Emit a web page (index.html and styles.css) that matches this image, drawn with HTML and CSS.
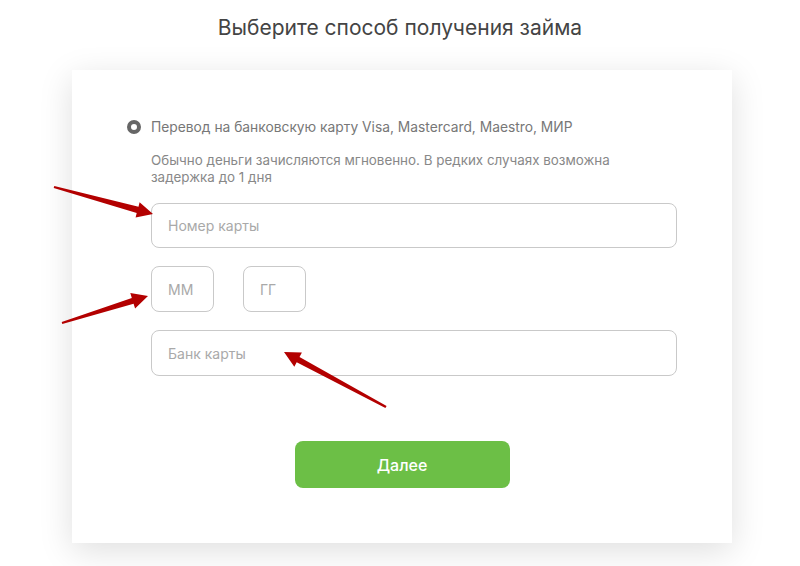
FILE: index.html
```html
<!DOCTYPE html>
<html lang="ru">
<head>
<meta charset="utf-8">
<title>Выберите способ получения займа</title>
<link rel="stylesheet" href="styles.css">
</head>
<body>
<h1 class="title">Выберите способ получения займа</h1>
<div class="card">
  <label class="option">
    <span class="radio"></span>
    <span class="option-text">Перевод на банковскую карту Visa, Mastercard, Maestro, МИР</span>
  </label>
  <div class="fields">
    <p class="note">Обычно деньги зачисляются мгновенно. В редких случаях возможна задержка до 1 дня</p>
    <input class="field first" type="text" placeholder="Номер карты">
    <div class="date-row">
      <input class="field small" type="text" placeholder="ММ">
      <input class="field small" type="text" placeholder="ГГ">
    </div>
    <input class="field" type="text" placeholder="Банк карты">
  </div>
  <div class="actions">
    <button class="btn" type="button">Далее</button>
  </div>
</div>
<svg class="arrows" width="800" height="566" viewBox="0 0 800 566">
  <polygon points="53.7,188.1 136.7,212.9 135.6,217.4 153,214 139.6,202.2 138.5,206.7 54.3,185.9"/>
  <polygon points="62.3,324.1 133.6,303.7 135.1,308.5 148,296 130.3,293.1 131.8,297.9 61.7,321.9"/>
  <polygon points="386.6,405.9 299.5,357.0 301.9,352.5 284,352 294.3,366.7 296.7,362.2 385.4,408.1"/>
</svg>
</body>
</html>
```
FILE: styles.css
```css
html, body {
  margin: 0;
  padding: 0;
  background: #ffffff;
}
body {
  font-family: Inter, Roboto, "Liberation Sans", sans-serif;
  position: relative;
  width: 800px;
  height: 566px;
  overflow: hidden;
}
.title {
  margin: 14px 0 28px;
  font-size: 21px;
  line-height: 28px;
  font-weight: 400;
  color: #444444;
  text-align: center;
}
.card {
  margin-left: 72px;
  width: 660px;
  box-sizing: border-box;
  padding: 47px 55px 55px;
  background: #ffffff;
  box-shadow: 0 8px 32px rgba(0, 0, 0, 0.13);
}
.option {
  display: flex;
  align-items: center;
  gap: 10px;
  height: 20px;
}
.radio {
  width: 14px;
  height: 14px;
  box-sizing: border-box;
  border: 4px solid #666666;
  border-radius: 50%;
  flex: none;
}
.option-text {
  font-size: 13.8px;
  color: #777777;
}
.fields {
  padding-left: 24px;
  width: 526px;
  display: flex;
  flex-direction: column;
  gap: 18px;
}
.note {
  margin: 15px 0 -1px;
  width: 480px;
  font-size: 13.4px;
  line-height: 17px;
  color: #888888;
}
.field {
  display: block;
  box-sizing: border-box;
  width: 526px;
  height: 46px;
  margin: 0;
  padding: 0 16px;
  border: 1px solid #c9c9c9;
  border-radius: 8px;
  font-family: inherit;
  font-size: 14px;
  color: #555555;
  background: #ffffff;
  outline: none;
}
.field.first {
  height: 45px;
}
.field::placeholder {
  color: #a9a9a9;
}
.date-row {
  display: flex;
  gap: 29px;
}
.field.small {
  width: 63px;
}
.actions {
  display: flex;
  justify-content: center;
  margin-top: 65px;
}
.btn {
  width: 215px;
  height: 47px;
  border: none;
  border-radius: 8px;
  background: #6cbf46;
  color: #ffffff;
  font-family: inherit;
  font-size: 16px;
  font-weight: 500;
  cursor: pointer;
}
.arrows {
  position: absolute;
  left: 0;
  top: 0;
  pointer-events: none;
  fill: #b30000;
}
```
